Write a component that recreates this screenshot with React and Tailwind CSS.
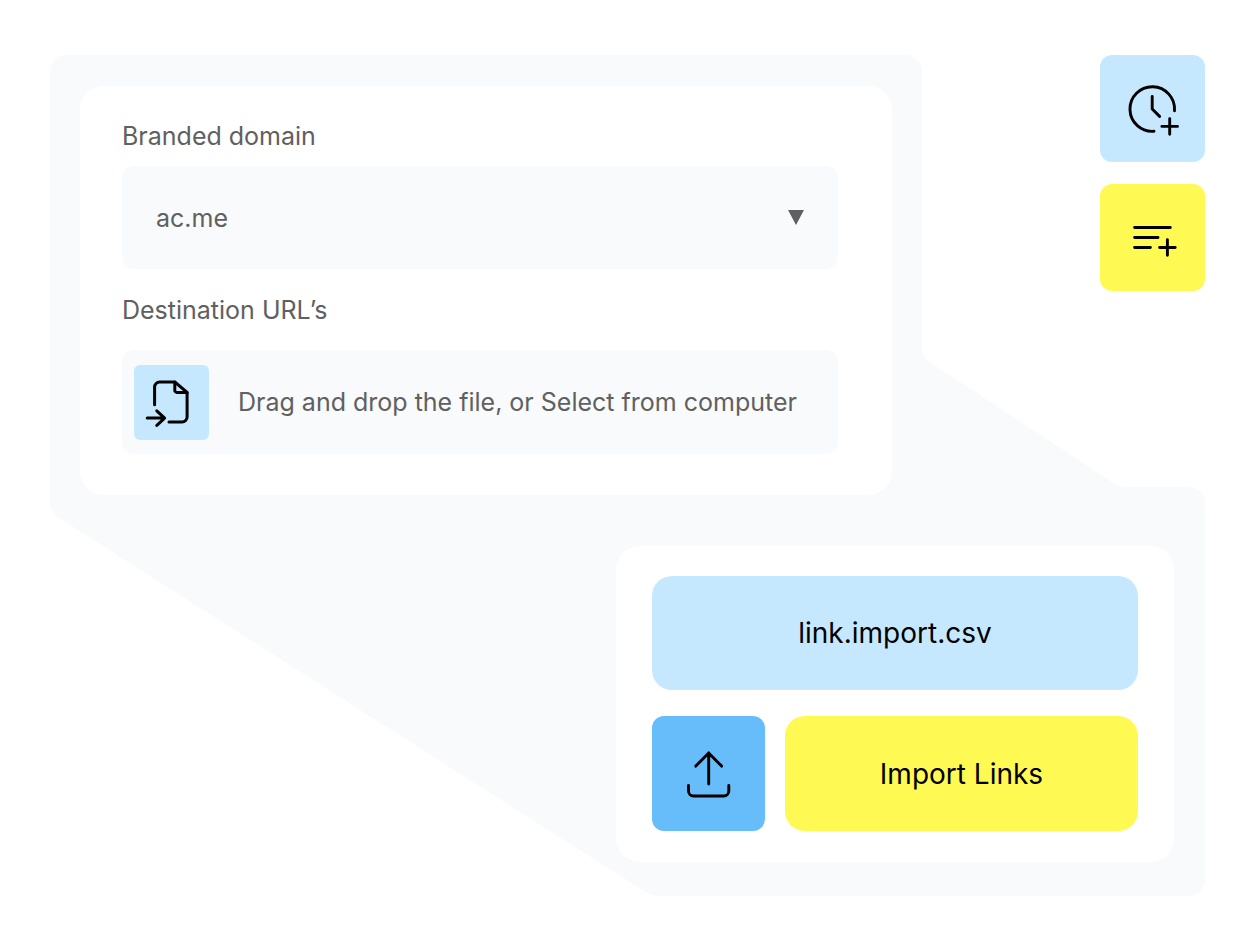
import { useState } from 'react';

const strokeProps = {
    fill: 'none',
    stroke: 'currentColor',
    strokeWidth: 2.9,
    strokeLinecap: 'round',
    strokeLinejoin: 'round',
    'aria-hidden': true,
};

function ClockPlusIcon() {
    return (
        <svg className="h-16 w-16" viewBox="0.8 0.8 64 64" {...strokeProps}>
            <path d="M54.3 34.6A22.3 22.3 0 1 0 33.8 55.1" />
            <path d="M32 20.2V32.8L39.4 40.2" />
            <path d="M41.7 50.2H57.3M49.5 42.4V58" />
        </svg>
    );
}

function ListPlusIcon() {
    return (
        <svg className="h-16 w-16" viewBox="0.8 0.4 64 64" {...strokeProps}>
            <path d="M14.4 21.9H50.1M14.4 31.9H37.8M14.4 41.9H30.2" />
            <path d="M39.4 41.9H55M47.2 34.1V49.7" />
        </svg>
    );
}

function FileImportIcon() {
    return (
        <svg className="h-14 w-14" viewBox="0.8 0.8 56 56" {...strokeProps} strokeWidth={3}>
            <path d="M11.4 31.6V13.8a5 5 0 0 1 5-5H31.6L43.9 19.2V43.8a5 5 0 0 1-5 5H25.8" />
            <path d="M31.6 8.8V17.2a2 2 0 0 0 2 2H43.9" />
            <path d="M4 44.9H21.4M13.6 37.6L21.4 44.9L13.6 52.2" />
        </svg>
    );
}

function UploadIcon() {
    return (
        <svg className="h-14 w-14" viewBox="0.6 0.9 56 56" {...strokeProps}>
            <path d="M28.3 39V7.8M15.4 21L28.3 7.8L41.2 21" />
            <path d="M8.1 40.4V45.9a5 5 0 0 0 5 5H43.4a5 5 0 0 0 5-5V40.4" />
        </svg>
    );
}

// Two rounded panels joined by a diagonal band
function Backdrop() {
    return (
        <svg
            className="absolute inset-0 -z-10 h-full w-full text-[#f9fafc]"
            viewBox="0 0 1155 841"
            preserveAspectRatio="none"
            fill="currentColor"
            aria-hidden="true"
        >
            <path d="M16 0H856A16 16 0 0 1 872 16V292C872 298 875 303.500 880 307L1064 428.500Q1069 432 1075 432H1139A16 16 0 0 1 1155 448V825A16 16 0 0 1 1139 841H608Q602 841 597 838L9 463Q0 456.500 0 447V16A16 16 0 0 1 16 0Z" />
        </svg>
    );
}

function BulkImportForm() {
    const [domain, setDomain] = useState('ac.me');

    return (
        <form className="min-w-0 flex-1 rounded-3xl bg-white pt-8 pr-[54px] pb-[41px] pl-[42px] text-[25px] leading-9 text-[#606060]">
            <label htmlFor="domain" className="block">
                Branded domain
            </label>
            <div className="relative mt-3">
                <select
                    id="domain"
                    value={domain}
                    onChange={e => setDomain(e.target.value)}
                    className="h-[103px] w-full appearance-none rounded-xl bg-[#f9fafc] px-[34px]"
                >
                    <option value="ac.me">ac.me</option>
                </select>
                <svg
                    className="pointer-events-none absolute top-11 right-[34px] h-[15px] w-4"
                    viewBox="0 0 16 15"
                    fill="currentColor"
                    aria-hidden="true"
                >
                    <path d="M0 0H16L8 15Z" />
                </svg>
            </div>

            <label htmlFor="urls" className="mt-[23px] block">
                Destination URL’s
            </label>
            <label
                htmlFor="urls"
                className="mt-[22px] flex h-[104px] cursor-pointer items-center gap-[29px] rounded-xl bg-[#f9fafc] pl-3"
            >
                <span className="flex size-[75px] shrink-0 items-center justify-center rounded-md bg-[#c6e8ff] text-black">
                    <FileImportIcon />
                </span>
                <span className="whitespace-nowrap">
                    Drag and drop the file, or Select from computer
                </span>
                <input id="urls" type="file" accept=".csv" className="sr-only" />
            </label>
        </form>
    );
}

function ImportCard() {
    return (
        <div className="ml-auto flex w-full max-w-[558px] flex-col gap-[26px] rounded-3xl bg-white px-9 pt-[30px] pb-[31px] text-[28px] text-black">
            <div className="flex h-[114px] items-center justify-center rounded-[20px] bg-[#c6e8ff]">
                link.import.csv
            </div>
            <div className="flex gap-5">
                <button
                    type="button"
                    aria-label="Upload"
                    className="flex h-[115px] w-[113px] items-center justify-center rounded-xl bg-[#66bdfa]"
                >
                    <UploadIcon />
                </button>
                <button type="button" className="h-[115px] flex-1 rounded-[20px] bg-[#fff954]">
                    Import Links
                </button>
            </div>
        </div>
    );
}

export default function App() {
    return (
        <main className="min-h-screen bg-white pt-[55px] pr-12 pb-12 pl-[50px] font-['Inter',sans-serif]">
            <div className="relative isolate pb-[34px]">
                <Backdrop />

                <div className="flex gap-52 pl-[30px]">
                    <div className="flex min-w-0 flex-1 pt-[31px]">
                        <BulkImportForm />
                    </div>
                    <div className="flex flex-col gap-[22px]">
                        <button
                            type="button"
                            aria-label="Schedule"
                            className="flex h-[107px] w-[105px] items-center justify-center rounded-xl bg-[#c6e8ff]"
                        >
                            <ClockPlusIcon />
                        </button>
                        <button
                            type="button"
                            aria-label="Add to list"
                            className="flex h-[107px] w-[105px] items-center justify-center rounded-xl bg-[#fff954]"
                        >
                            <ListPlusIcon />
                        </button>
                    </div>
                </div>

                <div className="mt-[51px] flex pr-[31px]">
                    <ImportCard />
                </div>
            </div>
        </main>
    );
}
